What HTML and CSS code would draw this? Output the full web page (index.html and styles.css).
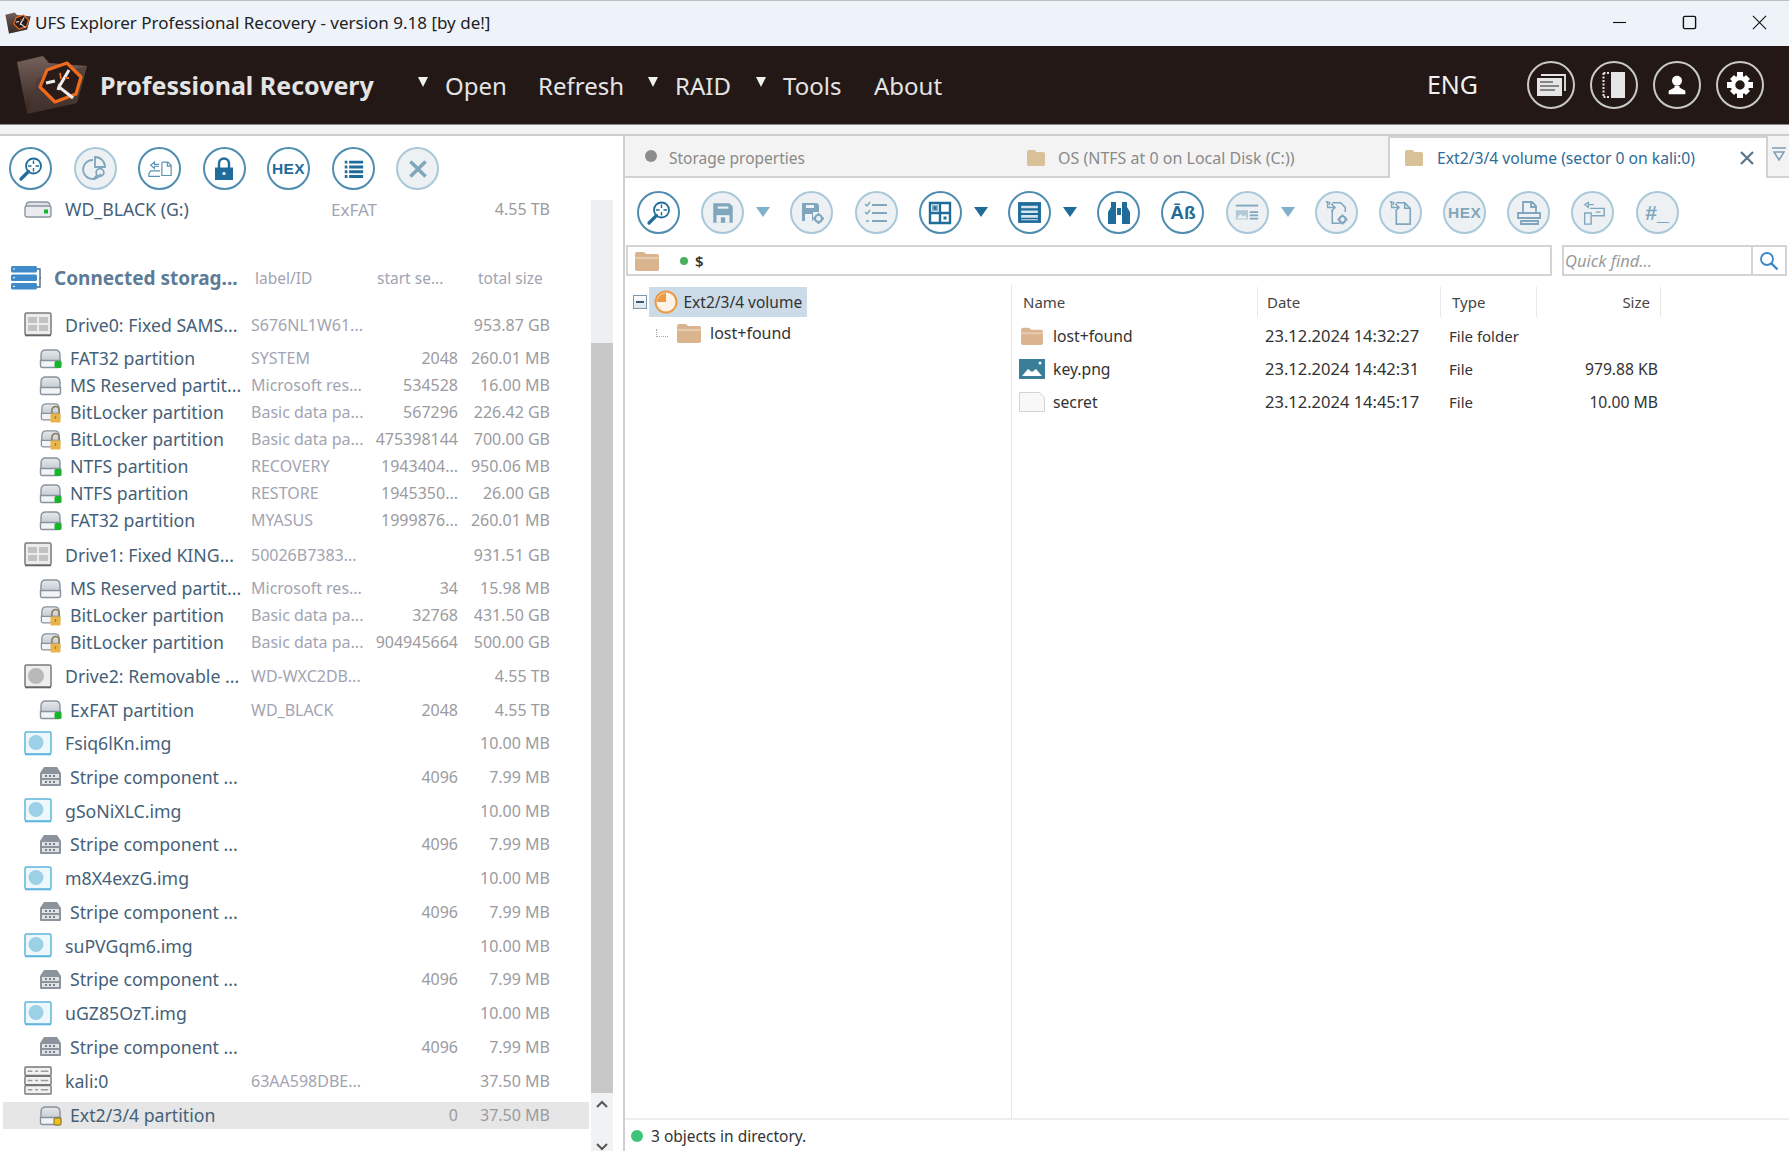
FILE: index.html
```html
<!DOCTYPE html>
<html lang="en">
<head>
<meta charset="utf-8">
<title>UFS Explorer Professional Recovery</title>
<link rel="stylesheet" href="styles.css">
</head>
<body>
<svg class="sprite" xmlns="http://www.w3.org/2000/svg">
  <defs>
    <linearGradient id="fg" x1="0" y1="0" x2="0" y2="1"><stop offset="0" stop-color="#75605a"/><stop offset="1" stop-color="#33241f"/></linearGradient>
    <linearGradient id="dg" x1="0" y1="0" x2="0" y2="1"><stop offset="0" stop-color="#e6e9ec"/><stop offset="1" stop-color="#bcc4cc"/></linearGradient>
  </defs>
  <symbol id="logo" viewBox="16 52 72 66">
    <path d="M17 62 43 56l6 7 38 3-10 37-50 11z" fill="url(#fg)"/>
    <path d="M17 62l10 52 10-36 50-12-10 37-50 11z" fill="#4a3833" opacity=".6"/>
    <path d="M67 63l14 14-5 17-21 8-15-15 7-17z" fill="#2a1c18" stroke="#f06a1c" stroke-width="3.200" stroke-linejoin="round"/>
    <path d="M46 83l9-2M69 70l-10 17 14 11M60 84l-2 6" fill="none" stroke="#eee" stroke-width="3"/>
    <path d="M60 73l1 6M65 78h4" fill="none" stroke="#f06a1c" stroke-width="1.800"/>
  </symbol>
  <symbol id="folder" viewBox="0 0 26 22"><path d="M1 5q0-3 2-3h6q2 0 3 2h11q2 0 2 2v13q0 2-2 2H3q-2 0-2-2z" fill="#d9b48f"/><path d="M1 7h24v2H1z" fill="#e6cdb2"/></symbol>
  <symbol id="folder2" viewBox="0 0 20 18"><path d="M1 3q0-2 2-2h5q2 0 2 2h7q2 0 2 2v11q0 1-2 1H3q-2 0-2-1z" fill="#d8c199"/></symbol>
  <g id="diskbase"><path d="M2 16V7q0-5 5-5h9q5 0 5 5v9" fill="url(#dg)" stroke="#87939f" stroke-width="1.400"/><path d="M1.500 12.500h20v5q0 2-2 2h-16q-2 0-2-2z" fill="#f2f3f4" stroke="#87939f" stroke-width="1.400"/></g>
  <symbol id="part" viewBox="0 0 23 21"><use href="#diskbase"/><rect x="15.500" y="13" width="7" height="7" rx="1.500" fill="#18b52a"/></symbol>
  <symbol id="partgrey" viewBox="0 0 23 21"><use href="#diskbase"/></symbol>
  <symbol id="partlock" viewBox="0 0 23 23"><use href="#diskbase"/><path d="M13 13V9a4 4 0 0 1 8 0v4" fill="none" stroke="#8a7a55" stroke-width="1.700"/><rect x="11.500" y="12.500" width="11" height="10" rx="1.200" fill="#e9b54b"/><path d="M17 15.500v3" stroke="#a9761c" stroke-width="1.400"/></symbol>
  <symbol id="partyellow" viewBox="0 0 23 21"><use href="#diskbase"/><rect x="15" y="13" width="7" height="7" rx="1" fill="#f0c020" stroke="#7f6a20"/></symbol>
  <symbol id="wdisk" viewBox="0 0 28 18"><path d="M2 8V6q0-4 4-4h16q4 0 4 4v2" fill="#dfe2e6" stroke="#8b96a1" stroke-width="1.400"/><rect x="1" y="6" width="26" height="11" rx="2" fill="#e9ebee" stroke="#8b96a1" stroke-width="1.400"/><rect x="20" y="9.500" width="4" height="4" fill="#18b52a"/></symbol>
  <symbol id="drive" viewBox="0 0 28 25"><rect x="1" y="1" width="26" height="22" rx="1.500" fill="#ececec" stroke="#7b7b7b" stroke-width="1.500"/><path d="M1 23.500h26" stroke="#666" stroke-width="1.600"/><rect x="4" y="5" width="9" height="6" fill="#c2c2c2"/><rect x="15" y="5" width="9" height="6" fill="#c2c2c2"/><rect x="4" y="13" width="9" height="6" fill="#c2c2c2"/><rect x="15" y="13" width="9" height="6" fill="#c2c2c2"/></symbol>
  <symbol id="removable" viewBox="0 0 28 25"><rect x="1" y="1" width="26" height="22" rx="1.500" fill="#eee" stroke="#7b7b7b" stroke-width="1.500"/><path d="M1 23.500h26" stroke="#666" stroke-width="1.600"/><circle cx="12" cy="12" r="8" fill="#b9b9b9"/></symbol>
  <symbol id="img" viewBox="0 0 28 25"><rect x="1" y="1" width="26" height="22" rx="1.500" fill="#eef8fc" stroke="#5fb5dd" stroke-width="1.500"/><path d="M1 23.500h26" stroke="#5fb5dd" stroke-width="1.600"/><circle cx="12" cy="11.500" r="7.500" fill="#9bd0e6"/></symbol>
  <symbol id="stripe" viewBox="0 0 23 21"><path d="M5 1h13l4 6v12q0 1-1 1H2q-1 0-1-1V7z" fill="#8b949c"/><path d="M3 8h17v4H3zM3 14h17v4H3z" fill="#dfe3e6"/><path d="M6 10h2M10 10h2M14 10h2M6 16h2M10 16h2M14 16h2" stroke="#77818a" stroke-width="2"/></symbol>
  <symbol id="server" viewBox="0 0 30 32"><rect x="1" y="1" width="28" height="9" rx="1" fill="#f2f2f2" stroke="#767676" stroke-width="1.500"/><rect x="1" y="11" width="28" height="9" rx="1" fill="#f2f2f2" stroke="#767676" stroke-width="1.500"/><rect x="1" y="21" width="28" height="9" rx="1" fill="#f2f2f2" stroke="#767676" stroke-width="1.500"/><path d="M4 5.500h5M12 5.500h3M18 5.500h8M4 15.500h5M12 15.500h3M18 15.500h8M4 25.500h5M12 25.500h3M18 25.500h8" stroke="#9a9a9a" stroke-width="1.600"/></symbol>
  <symbol id="storage" viewBox="0 0 31 26"><path d="M26 4h4v18h-4M30 13h1" fill="none" stroke="#4d6a86" stroke-width="1.400"/><rect x="1" y="1" width="26" height="6.500" rx="1.500" fill="#3f8acb"/><rect x="1" y="9.500" width="26" height="6.500" rx="1.500" fill="#3f8acb"/><rect x="1" y="18" width="26" height="6.500" rx="1.500" fill="#3f8acb"/><path d="M3 4h2M3 12.700h2M3 21.300h2" stroke="#fff"/></symbol>
  <symbol id="i-mag" viewBox="0 0 26 26"><circle cx="15.500" cy="10" r="7.500" fill="none" stroke="currentColor" stroke-width="1.800"/><path d="M10.500 15.500 3 23" stroke="currentColor" stroke-width="3.200" stroke-linecap="round"/><path d="M15.500 4.500v11M10 10h11" stroke="currentColor" stroke-width="1.400" stroke-dasharray="3.500 4"/></symbol>
  <symbol id="i-pie" viewBox="0 0 26 26"><path d="M11 4a9.500 9.500 0 1 0 8 14" fill="none" stroke="currentColor" stroke-width="1.800"/><path d="M13 1a10 10 0 0 1 10 10H13z" fill="none" stroke="currentColor" stroke-width="1.800"/><circle cx="18" cy="16.500" r="3.800" fill="none" stroke="currentColor" stroke-width="1.800"/><path d="m15 19.500-3.500 4" stroke="currentColor" stroke-width="2.200"/></symbol>
  <symbol id="i-xfer" viewBox="0 0 28 26"><path d="M16 6.500V20h10V9l-3.500-3.500H17zM22 6v4h4" fill="none" stroke="currentColor" stroke-width="1.300"/><path d="M13 8H8V5.500L4 9l4 3.500V10h5" fill="none" stroke="currentColor" stroke-width="1.200"/><path d="M14 15H4l-2 3v3h12" fill="none" stroke="currentColor" stroke-width="1.300"/></symbol>
  <symbol id="i-lock" viewBox="0 0 24 26"><path d="M7 12V7.500a5 5 0 0 1 10 0V12" fill="none" stroke="currentColor" stroke-width="2.400"/><path d="M3 11.500h18V24H3z" fill="currentColor"/><circle cx="12" cy="17.500" r="1.600" fill="#fff"/></symbol>
  <symbol id="i-list" viewBox="0 0 24 24"><path d="M7 3h16v3.400H7zM7 8.500h16v3.400H7zM7 14h16v3.400H7zM7 19.500h16v3.400H7zM2 3h3v3.400H2zM2 8.500h3v3.400H2zM2 14h3v3.400H2zM2 19.500h3v3.400H2z" fill="currentColor"/></symbol>
  <symbol id="i-x" viewBox="0 0 24 24"><path d="m5 5 14 14M19 5 5 19" stroke="currentColor" stroke-width="3.200"/></symbol>
  <symbol id="i-save" viewBox="0 0 24 24"><path d="M3 3h15l3 3v15H3z" fill="currentColor"/><path d="M7 6h10v2H7z" fill="#eef2f5"/><path d="M6 14h12v7H6z" fill="#eef2f5"/><path d="M10 16h4v5h-4z" fill="currentColor"/></symbol>
  <symbol id="i-savegear" viewBox="0 0 26 26"><path d="M3 3h15l2 2v7h-6v9H3z" fill="currentColor"/><path d="M7 5h8v3H7zM6 14h7v7H6z" fill="#eef2f5"/><circle cx="19.500" cy="18.500" r="3.500" fill="none" stroke="currentColor" stroke-width="2.200"/><path d="M19.500 13v2M19.500 22v2M14 18.500h2M23 18.500h2" stroke="currentColor" stroke-width="2"/></symbol>
  <symbol id="i-check" viewBox="0 0 26 26"><path d="M9 5h15M9 13h15M9 21h15" stroke="currentColor" stroke-width="2.200"/><path d="m2 4 2 2 3-4M2 12l2 2 3-4M3 21h3" fill="none" stroke="currentColor" stroke-width="1.400"/></symbol>
  <symbol id="i-grid" viewBox="0 0 24 24"><path d="M2 2h20v20H2zM12 2v20M2 12h20" fill="none" stroke="currentColor" stroke-width="2.400"/><path d="M4 4h6v6H4z" fill="currentColor" opacity=".55"/><path d="M5.500 5.500h3v3h-3zM15.500 15.500h3v3h-3z" fill="currentColor"/></symbol>
  <symbol id="i-lines" viewBox="0 0 24 24"><path d="M1 2h22v20H1z" fill="currentColor"/><path d="M4 5.500h16v2.500H4zM4 10h16v2.500H4zM4 14.500h16V17H4zM4 18.500h16v1H4z" fill="#d6e4ee"/></symbol>
  <symbol id="i-bino" viewBox="0 0 26 26"><path d="M2 24V12l3-5V2h5v22zM24 24V12l-3-5V2h-5v22zM11 8h4v7h-4z" fill="currentColor"/></symbol>
  <symbol id="i-card" viewBox="0 0 28 24"><path d="M2 4h24" stroke="currentColor" stroke-width="2"/><path d="M2 9h13v10H2z" fill="currentColor" opacity=".55"/><path d="m3 18 4-5 3 3 2-2 2 4z" fill="#eef2f5"/><path d="M17 11h9M17 14.500h9M17 18h9" stroke="currentColor" stroke-width="2"/></symbol>
  <symbol id="i-filegear" viewBox="0 0 26 28"><path d="M9 11v14h9M9 3h9l5 5v5" fill="none" stroke="currentColor" stroke-width="1.700"/><path d="M2 2h2v6h7M8 4l4 4-4 4M6 2v3" fill="none" stroke="currentColor" stroke-width="1.600"/><circle cx="20" cy="21" r="3.400" fill="none" stroke="currentColor" stroke-width="2.200"/><path d="M20 15.500v2M20 24.500v2M14.500 21h2M23.500 21h2" stroke="currentColor" stroke-width="2"/></symbol>
  <symbol id="i-file" viewBox="0 0 26 28"><path d="M9 12v14h15V9l-6-6H9" fill="none" stroke="currentColor" stroke-width="1.800"/><path d="M2 2h2v6h7M8 4l4 4-4 4M6 2v3M18 3v6h6" fill="none" stroke="currentColor" stroke-width="1.600"/></symbol>
  <symbol id="i-print" viewBox="0 0 26 26"><path d="M7 12V2h9l4 4v6M15 2v5h5" fill="none" stroke="currentColor" stroke-width="1.800"/><path d="M2 13h22v5H2z" fill="none" stroke="currentColor" stroke-width="1.800"/><path d="M5 21h17v3H5z" fill="none" stroke="currentColor" stroke-width="1.800"/></symbol>
  <symbol id="i-move" viewBox="0 0 28 26"><path d="M5 13h7v12H5z" fill="none" stroke="currentColor" stroke-width="1.500"/><path d="M11 8h15v8H13" fill="none" stroke="currentColor" stroke-width="1.500"/><path d="M17 12h5M15 4H9V1.500L5 4l4 3V4" fill="none" stroke="currentColor" stroke-width="1.300"/></symbol>
  <symbol id="h-win" viewBox="0 0 30 24"><path d="M5 2h24v16" fill="none" stroke="#e6e6e6" stroke-width="1.800"/><rect x="1" y="5" width="25" height="18" fill="#e6e6e6"/><path d="M4 9h13M4 13h19M4 17h15" stroke="#666" stroke-width="1.500"/></symbol>
  <symbol id="h-panel" viewBox="0 0 24 28"><rect x="9" y="1" width="14" height="26" fill="#e6e6e6"/><path d="M1.500 2h6M1.500 26h6M1.500 2v24" fill="none" stroke="#e6e6e6" stroke-width="2" stroke-dasharray="2 1.500"/></symbol>
  <symbol id="h-user" viewBox="0 0 24 26"><circle cx="12" cy="8" r="6" fill="#fff"/><path d="M9 14v2l-7 4v4h20v-4l-7-4v-2z" fill="#fff"/></symbol>
  <symbol id="h-gear" viewBox="0 0 28 28"><g fill="#fff"><path d="M11 1h6v5h-6zM11 22h6v5h-6zM1 11h5v6H1zM22 11h5v6h-5z"/><path d="m4 8 4-4 4 4-4 4zM24 8l-4-4-4 4 4 4zM4 20l4 4 4-4-4-4zM24 20l-4 4-4-4 4-4z"/></g><circle cx="14" cy="14" r="7" fill="none" stroke="#fff" stroke-width="4.500"/></symbol>
</svg>

<header class="titlebar">
  <svg class="app-ico"><use href="#logo"/></svg>
  <span class="title-text">UFS Explorer Professional Recovery - version 9.18 [by de!]</span>
  <div class="win-btns">
    <svg class="win-ic" viewBox="0 0 16 16"><path d="M1 8h14" stroke="#111" stroke-width="1.200"/></svg>
    <svg class="win-ic" viewBox="0 0 16 16"><rect x="1.500" y="1.500" width="13" height="13" rx="1.500" fill="none" stroke="#111" stroke-width="1.500"/></svg>
    <svg class="win-ic" viewBox="0 0 16 16"><path d="m1 1 14 14M15 1 1 15" stroke="#111" stroke-width="1.200"/></svg>
  </div>
</header>

<nav class="appbar">
  <svg class="logo"><use href="#logo"/></svg>
  <span class="brand">Professional Recovery</span>
  <span class="caret"></span><span class="menu m-open">Open</span>
  <span class="menu m-refresh">Refresh</span>
  <span class="caret"></span><span class="menu m-raid">RAID</span>
  <span class="caret"></span><span class="menu m-tools">Tools</span>
  <span class="menu m-about">About</span>
  <span class="lang">ENG</span>
  <div class="hbtns">
    <span class="hbtn"><svg class="h1"><use href="#h-win"/></svg></span>
    <span class="hbtn"><svg class="h2"><use href="#h-panel"/></svg></span>
    <span class="hbtn"><svg class="h3"><use href="#h-user"/></svg></span>
    <span class="hbtn"><svg class="h4"><use href="#h-gear"/></svg></span>
  </div>
</nav>
<div class="strip"></div>

<main class="main">
  <section class="left">
    <div class="ltool">
      <span class="cb"><svg class="ci"><use href="#i-mag"/></svg></span>
      <span class="cb off"><svg class="ci"><use href="#i-pie"/></svg></span>
      <span class="cb thin"><svg class="ci"><use href="#i-xfer"/></svg></span>
      <span class="cb"><svg class="ci"><use href="#i-lock"/></svg></span>
      <span class="cb hex">HEX</span>
      <span class="cb"><svg class="ci sm"><use href="#i-list"/></svg></span>
      <span class="cb off"><svg class="ci"><use href="#i-x"/></svg></span>
    </div>
    <div class="lbody">
      <div class="list">
        <div class="row top"><div class="cell"><svg class="dico small"><use href="#wdisk"/></svg><span class="dname">WD_BLACK (G:)</span></div><div class="lab fs">ExFAT</div><div class="st"></div><div class="sz">4.55 TB</div></div>

        <div class="row conn"><div class="cell"><svg class="sico"><use href="#storage"/></svg><span class="cname">Connected storag...</span></div><div class="lab ch ch1">label/ID</div><div class="lab ch ch2">start se...</div><div class="lab ch ch3">total size</div></div>

        <div class="group">
          <div class="row d mb"><div class="cell"><svg class="dico"><use href="#drive"/></svg><span class="dname">Drive0: Fixed SAMS...</span></div><div class="lab">S676NL1W61...</div><div class="st"></div><div class="sz">953.87 GB</div></div>
          <div class="row p"><div class="cell"><svg class="pico"><use href="#part"/></svg><span class="pname">FAT32 partition</span></div><div class="lab">SYSTEM</div><div class="st">2048</div><div class="sz">260.01 MB</div></div>
          <div class="row p"><div class="cell"><svg class="pico"><use href="#partgrey"/></svg><span class="pname">MS Reserved partit...</span></div><div class="lab">Microsoft res...</div><div class="st">534528</div><div class="sz">16.00 MB</div></div>
          <div class="row p"><div class="cell"><svg class="pico"><use href="#partlock"/></svg><span class="pname">BitLocker partition</span></div><div class="lab">Basic data pa...</div><div class="st">567296</div><div class="sz">226.42 GB</div></div>
          <div class="row p"><div class="cell"><svg class="pico"><use href="#partlock"/></svg><span class="pname">BitLocker partition</span></div><div class="lab">Basic data pa...</div><div class="st">475398144</div><div class="sz">700.00 GB</div></div>
          <div class="row p"><div class="cell"><svg class="pico"><use href="#part"/></svg><span class="pname">NTFS partition</span></div><div class="lab">RECOVERY</div><div class="st">1943404...</div><div class="sz">950.06 MB</div></div>
          <div class="row p"><div class="cell"><svg class="pico"><use href="#part"/></svg><span class="pname">NTFS partition</span></div><div class="lab">RESTORE</div><div class="st">1945350...</div><div class="sz">26.00 GB</div></div>
          <div class="row p"><div class="cell"><svg class="pico"><use href="#part"/></svg><span class="pname">FAT32 partition</span></div><div class="lab">MYASUS</div><div class="st">1999876...</div><div class="sz">260.01 MB</div></div>
        </div>
        <div class="group gap">
          <div class="row d mb"><div class="cell"><svg class="dico"><use href="#drive"/></svg><span class="dname">Drive1: Fixed KING...</span></div><div class="lab">50026B7383...</div><div class="st"></div><div class="sz">931.51 GB</div></div>
          <div class="row p"><div class="cell"><svg class="pico"><use href="#partgrey"/></svg><span class="pname">MS Reserved partit...</span></div><div class="lab">Microsoft res...</div><div class="st">34</div><div class="sz">15.98 MB</div></div>
          <div class="row p"><div class="cell"><svg class="pico"><use href="#partlock"/></svg><span class="pname">BitLocker partition</span></div><div class="lab">Basic data pa...</div><div class="st">32768</div><div class="sz">431.50 GB</div></div>
          <div class="row p"><div class="cell"><svg class="pico"><use href="#partlock"/></svg><span class="pname">BitLocker partition</span></div><div class="lab">Basic data pa...</div><div class="st">904945664</div><div class="sz">500.00 GB</div></div>
        </div>
        <div class="group gap">
          <div class="row d mb"><div class="cell"><svg class="dico"><use href="#removable"/></svg><span class="dname">Drive2: Removable ...</span></div><div class="lab">WD-WXC2DB...</div><div class="st"></div><div class="sz">4.55 TB</div></div>
          <div class="row p"><div class="cell"><svg class="pico"><use href="#part"/></svg><span class="pname">ExFAT partition</span></div><div class="lab">WD_BLACK</div><div class="st">2048</div><div class="sz">4.55 TB</div></div>
        </div>
        <div class="group">
          <div class="row d"><div class="cell"><svg class="dico"><use href="#img"/></svg><span class="dname">Fsiq6lKn.img</span></div><div class="lab"></div><div class="st"></div><div class="sz">10.00 MB</div></div>
          <div class="row s"><div class="cell"><svg class="pico"><use href="#stripe"/></svg><span class="pname">Stripe component ...</span></div><div class="lab"></div><div class="st">4096</div><div class="sz">7.99 MB</div></div>
        </div>
        <div class="row d"><div class="cell"><svg class="dico"><use href="#img"/></svg><span class="dname">gSoNiXLC.img</span></div><div class="lab"></div><div class="st"></div><div class="sz">10.00 MB</div></div>
        <div class="row s"><div class="cell"><svg class="pico"><use href="#stripe"/></svg><span class="pname">Stripe component ...</span></div><div class="lab"></div><div class="st">4096</div><div class="sz">7.99 MB</div></div>
        <div class="row d"><div class="cell"><svg class="dico"><use href="#img"/></svg><span class="dname">m8X4exzG.img</span></div><div class="lab"></div><div class="st"></div><div class="sz">10.00 MB</div></div>
        <div class="row s"><div class="cell"><svg class="pico"><use href="#stripe"/></svg><span class="pname">Stripe component ...</span></div><div class="lab"></div><div class="st">4096</div><div class="sz">7.99 MB</div></div>
        <div class="row d"><div class="cell"><svg class="dico"><use href="#img"/></svg><span class="dname">suPVGqm6.img</span></div><div class="lab"></div><div class="st"></div><div class="sz">10.00 MB</div></div>
        <div class="row s"><div class="cell"><svg class="pico"><use href="#stripe"/></svg><span class="pname">Stripe component ...</span></div><div class="lab"></div><div class="st">4096</div><div class="sz">7.99 MB</div></div>
        <div class="row d"><div class="cell"><svg class="dico"><use href="#img"/></svg><span class="dname">uGZ85OzT.img</span></div><div class="lab"></div><div class="st"></div><div class="sz">10.00 MB</div></div>
        <div class="row s"><div class="cell"><svg class="pico"><use href="#stripe"/></svg><span class="pname">Stripe component ...</span></div><div class="lab"></div><div class="st">4096</div><div class="sz">7.99 MB</div></div>
        <div class="row d mb last"><div class="cell"><svg class="dico tall"><use href="#server"/></svg><span class="dname">kali:0</span></div><div class="lab">63AA598DBE...</div><div class="st"></div><div class="sz">37.50 MB</div></div>
        <div class="row p sel"><div class="cell"><svg class="pico"><use href="#partyellow"/></svg><span class="pname">Ext2/3/4 partition</span></div><div class="lab"></div><div class="st">0</div><div class="sz">37.50 MB</div></div>
      </div>
      <div class="scroll">
        <div class="sb-track"></div>
        <div class="sb-thumb"></div>
        <div class="sb-end">
          <svg class="chev" viewBox="0 0 12 8"><path d="m1 7 5-5 5 5" fill="none" stroke="#555" stroke-width="2"/></svg>
          <svg class="chev" viewBox="0 0 12 8"><path d="m1 1 5 5 5-5" fill="none" stroke="#555" stroke-width="2"/></svg>
        </div>
      </div>
    </div>
  </section>

  <section class="right">
    <div class="tabs">
      <div class="tab t1"><span class="gdot"></span>Storage properties</div>
      <div class="tab t2"><svg class="tfold"><use href="#folder2"/></svg>OS (NTFS at 0 on Local Disk (C:))</div>
      <div class="tab t3"><svg class="tfold"><use href="#folder2"/></svg><span class="t3-text">Ext2/3/4 volume (sector 0 on kali:0)</span><svg class="tx" viewBox="0 0 14 14"><path d="m1 1 12 12M13 1 1 13" stroke="#5a7488" stroke-width="2.200"/></svg></div>
      <div class="tabmenu"><svg class="tm" viewBox="0 0 16 16"><path d="M1 2h14M3 6h10L8 14z" fill="none" stroke="#7ba0b8" stroke-width="1.500"/></svg></div>
    </div>
    <div class="rtool">
      <span class="cb"><svg class="ci"><use href="#i-mag"/></svg></span>
      <span class="cb off"><svg class="ci"><use href="#i-save"/></svg></span><span class="dd off"></span>
      <span class="cb off"><svg class="ci"><use href="#i-savegear"/></svg></span>
      <span class="cb off"><svg class="ci"><use href="#i-check"/></svg></span>
      <span class="cb"><svg class="ci md"><use href="#i-grid"/></svg></span><span class="dd"></span>
      <span class="cb"><svg class="ci lg"><use href="#i-lines"/></svg></span><span class="dd"></span>
      <span class="cb"><svg class="ci"><use href="#i-bino"/></svg></span>
      <span class="cb ab">Āß</span>
      <span class="cb off"><svg class="ci"><use href="#i-card"/></svg></span><span class="dd off"></span>
      <span class="cb off"><svg class="ci"><use href="#i-filegear"/></svg></span>
      <span class="cb off"><svg class="ci"><use href="#i-file"/></svg></span>
      <span class="cb off hex">HEX</span>
      <span class="cb off"><svg class="ci"><use href="#i-print"/></svg></span>
      <span class="cb off"><svg class="ci"><use href="#i-move"/></svg></span>
      <span class="cb off hash">#_</span>
    </div>
    <div class="pathrow">
      <div class="pathbox"><svg class="pfold"><use href="#folder"/></svg><span class="pdot"></span><span class="ptext">$</span></div>
      <div class="quick"><span class="qtext">Quick find...</span><span class="qbtn"><svg class="qi" viewBox="0 0 20 20"><circle cx="8" cy="8" r="6" fill="none" stroke="#3a86c8" stroke-width="1.800"/><path d="m12.500 12.500 6 6" stroke="#3a86c8" stroke-width="2.400"/></svg></span></div>
    </div>
    <div class="content">
      <div class="tree">
        <div class="troot">
          <span class="minus"></span>
          <span class="tsel"><svg class="pie" viewBox="0 0 24 24"><circle cx="12" cy="12" r="10.500" fill="#fdf3e6" stroke="#ec9a45" stroke-width="2"/><path d="M12 3a9 9 0 0 0-9 9h9z" fill="#ec9a45"/></svg>Ext2/3/4 volume</span>
        </div>
        <div class="tchild"><span class="dots"></span><svg class="tcf"><use href="#folder"/></svg>lost+found</div>
      </div>
      <div class="files">
        <div class="fhead"><span class="fh c1">Name</span><span class="fh c2">Date</span><span class="fh c3">Type</span><span class="fh c4">Size</span></div>
        <div class="frow"><span class="c1 fn"><svg class="fi"><use href="#folder"/></svg>lost+found</span><span class="c2">23.12.2024 14:32:27</span><span class="c3">File folder</span><span class="c4"></span></div>
        <div class="frow"><span class="c1 fn"><svg class="fi" viewBox="0 0 26 20"><rect width="26" height="20" fill="#3a7f97"/><path d="M3 17l6-7 4 3 4-3 6 7z" fill="#fff"/><circle cx="21" cy="4" r="1.500" fill="#fff"/></svg>key.png</span><span class="c2">23.12.2024 14:42:31</span><span class="c3">File</span><span class="c4">979.88 KB</span></div>
        <div class="frow"><span class="c1 fn"><svg class="fi" viewBox="0 0 26 20"><path d="M.5.500h20l5 5v14H.5z" fill="#f8f8f8" stroke="#d4d4d4"/></svg>secret</span><span class="c2">23.12.2024 14:45:17</span><span class="c3">File</span><span class="c4">10.00 MB</span></div>
      </div>
    </div>
    <footer class="status"><span class="sdot"></span>3 objects in directory.</footer>
  </section>
</main>
</body>
</html>
```
FILE: styles.css
```css
* { box-sizing: border-box; }
html, body { margin: 0; padding: 0; }
body {
  width: 1789px; height: 1151px; overflow: hidden;
  font-family: "Noto Sans", "Open Sans", sans-serif;
  background: #fff; color: #333;
}
.sprite { width: 0; height: 0; display: block; overflow: hidden; }

.titlebar {
  height: 46px; background: #eef3fa; border-top: 1px solid #bdbdbd;
  display: flex; align-items: center; padding: 0 0 2px 5px;
}
.app-ico { width: 26px; height: 24px; margin-right: 4px; }
.title-text { font-size: 17px; color: #222; white-space: nowrap; }
.win-btns { margin-left: auto; display: flex; gap: 55px; padding-right: 22px; }
.win-ic { width: 15px; height: 15px; display: block; }

.appbar {
  height: 78px; background: #231815; color: #e6e6e6;
  display: flex; align-items: center; white-space: nowrap;
}
.logo { width: 72px; height: 66px; margin-left: 16px; flex: none; }
.brand { font-size: 25px; font-weight: 700; margin-left: 12px; width: 318px; color: #e4e4e4; }
.caret {
  width: 0; height: 0; flex: none; margin-right: 17px; margin-bottom: 6px;
  border-left: 5px solid transparent; border-right: 5px solid transparent; border-top: 10px solid #f0f0f0;
}
.menu { font-size: 24px; color: #e4e4e4; }
.m-open { width: 93px; }
.m-refresh { width: 110px; }
.m-raid { width: 81px; }
.m-tools { width: 91px; }
.lang { font-size: 25px; margin-left: auto; color: #f0f0f0; margin-right: 49px; transform: translateY(-1px); }
.hbtns { display: flex; gap: 15px; margin-right: 25px; }
.hbtn {
  width: 48px; height: 48px; border: 2px solid #c9c9c9; border-radius: 50%;
  display: flex; align-items: center; justify-content: center;
}
.h1 { width: 30px; height: 24px; }
.h2 { width: 24px; height: 28px; }
.h3 { width: 20px; height: 24px; }
.h4 { width: 28px; height: 28px; }

.strip { height: 12px; background: #f3f3f3; border-bottom: 2px solid #cdcdcd; border-top: 1px solid #888; }

.main { display: flex; height: 1015px; }
.left { width: 625px; flex: none; border-right: 2px solid #cfcfcf; }
.ltool { height: 61px; padding: 11px 0 0 9px; display: flex; gap: 21.500px; align-items: flex-start; }

.cb {
  width: 43px; height: 43px; flex: none; border-radius: 50%;
  border: 2px solid #4f8db0; background: #fff; color: #1f6b9a;
  display: flex; align-items: center; justify-content: center;
}
.cb.off { border-color: #a9c8d9; background: #eef1f3; color: #7fa6bd; }
.cb.thin { color: #5a93b5; }
.ci { width: 26px; height: 26px; }
.ci.sm { width: 21px; height: 21px; }
.ci.md { width: 24px; height: 24px; }
.ci.lg { width: 25px; height: 25px; }
.hex { font-weight: 700; font-size: 15.500px; letter-spacing: .4px; font-family: "Liberation Sans", sans-serif; }
.ab { font-weight: 700; font-size: 19px; font-family: "Liberation Sans", sans-serif; }
.hash { font-weight: 700; font-size: 21px; font-family: "Liberation Sans", sans-serif; }

.lbody { display: flex; height: 954px; overflow: hidden; }
.list { width: 586px; margin-left: 3px; flex: none; }
.row {
  display: grid; grid-template-columns: 248px 120px 87px 92px 39px;
  align-items: center; white-space: nowrap;
}
.cell { display: flex; align-items: center; }
.top { height: 24px; margin-bottom: 44px; }
.conn { height: 26px; margin-bottom: 17px; }
.d { height: 33.750px; }
.mb { margin-bottom: 3px; }
.mb.last { margin-bottom: 4px; }
.p { height: 27px; }
.s { height: 33.750px; }
.group { margin-top: 3px; }
.group.gap { margin-top: 4px; }
.sel { background: #e6e6e6; width: 586px; }
.dico { width: 28px; height: 25px; margin-left: 21px; margin-right: 13px; flex: none; }
.dico.small { height: 18px; }
.dico.tall { height: 32px; }
.pico { width: 23px; height: 21px; margin-left: 36px; margin-right: 8px; flex: none; }
.sico { width: 31px; height: 26px; margin-left: 7px; margin-right: 13px; flex: none; }
.dname, .pname { font-size: 17.700px; color: #456178; }
.cname { font-size: 19px; font-weight: 700; color: #5d7b95; }
.lab { font-size: 16px; color: #a2a4b2; overflow: visible; }
.fs { padding-left: 80px; font-size: 17px; }
.ch { font-size: 15.500px; }
.ch1 { padding-left: 4px; }
.ch2 { padding-left: 6px; }
.ch3 { padding-left: 20px; }
.st, .sz { font-size: 16px; color: #9b9ba0; text-align: right; }

.scroll { width: 22px; margin-left: 2px; margin-top: 3px; display: flex; flex-direction: column; flex: none; }
.sb-track { height: 143px; background: #eeeff1; flex: none; }
.sb-thumb { height: 750px; background: #c8c8c8; flex: none; }
.sb-end { flex: 1; background: #f1f2f4; display: flex; flex-direction: column; justify-content: space-between; align-items: center; padding: 7px 0 0; }
.chev { width: 12px; height: 8px; display: block; }

.right { flex: 1; display: flex; flex-direction: column; min-width: 0; }
.tabs { height: 42px; display: flex; align-items: flex-start; background: #f3f3f3; border-bottom: 2px solid #d2d2d2; flex: none; }
.tab { display: flex; align-items: center; white-space: nowrap; font-size: 15.500px; color: #8a8a8a; height: 44px; }
.t1 { width: 401px; padding-left: 20px; }
.gdot { width: 12px; height: 12px; border-radius: 50%; background: #8d8d8d; margin-right: 12px; transform: translateY(-2px); }
.t2 { width: 362px; font-size: 16px; }
.tfold { width: 20px; height: 18px; margin-right: 12px; flex: none; }
.t3 {
  width: 380px; background: #fff; border: 2px solid #d2d2d2; border-bottom: 0;
  height: 42px; padding-left: 14px; color: #2f6c96; flex: none; font-size: 15.700px;
}
.t3 .tfold { margin-right: 13px; }
.t3-text { width: 303px; }
.tx { width: 14px; height: 14px; flex: none; }
.tabmenu { flex: 1; display: flex; justify-content: center; padding-top: 10px; }
.tm { width: 16px; height: 16px; }

.rtool { height: 67px; padding: 13px 0 0 12px; display: flex; gap: 21.150px; align-items: flex-start; flex: none; }
.dd {
  width: 0; height: 0; margin: 16px -1px 0 -9px; flex: none;
  border-left: 7px solid transparent; border-right: 7px solid transparent; border-top: 10px solid #1f6b9a;
}
.dd.off { border-top-color: #7fb0cc; }

.pathrow { height: 31px; display: flex; gap: 10px; margin: 0 2px 0 1px; flex: none; }
.pathbox { flex: 1; border: 2px solid #d4d4d4; display: flex; align-items: center; padding-left: 6px; }
.pfold { width: 26px; height: 22px; margin-right: 20px; }
.pdot { width: 8px; height: 8px; border-radius: 50%; background: #4caf5e; margin-right: 7px; }
.ptext { font-size: 15px; font-weight: 600; color: #333; }
.quick { width: 225px; border: 2px solid #d4d4d4; display: flex; align-items: center; flex: none; }
.qtext { flex: 1; font-style: italic; font-size: 16.500px; color: #9a9a9a; padding-left: 1px; }
.qbtn { width: 34px; height: 100%; border-left: 2px solid #d4d4d4; display: flex; align-items: center; justify-content: center; }
.qi { width: 20px; height: 20px; }

.content { flex: 1; display: flex; min-height: 0; padding-top: 9px; }
.tree { width: 387px; border-right: 1px solid #e8e8e8; flex: none; padding-top: 2px; font-size: 16px; color: #333; }
.troot { display: flex; align-items: center; height: 30px; padding-left: 8px; }
.minus {
  width: 14px; height: 14px; border: 1px solid #7d95a8; background: linear-gradient(#fff, #dde5ec);
  display: flex; align-items: center; justify-content: center; margin-right: 2px; flex: none;
}
.minus::before { content: ""; width: 8px; height: 1.500px; background: #39566e; }
.tsel { background: #ccdbe8; height: 30px; width: 158px; display: flex; align-items: center; white-space: nowrap; padding-left: 5px; color: #333; font-size: 15.500px; }
.pie { width: 24px; height: 24px; margin-right: 5.500px; flex: none; }
.tchild { display: flex; align-items: center; height: 32px; padding-left: 31px; white-space: nowrap; }
.dots { width: 12px; height: 8px; border-left: 1px dotted #aaa; border-bottom: 1px dotted #aaa; margin-right: 8px; }
.tcf { width: 26px; height: 22px; margin-right: 8px; }

.files { flex: 1; font-size: 15.700px; color: #333; }
.fhead { display: grid; grid-template-columns: 246px 183px 96px 124px; height: 34px; align-items: center; color: #444; font-size: 15px; }
.fh { height: 30px; display: flex; align-items: center; border-right: 1px solid #e8e8e8; }
.fhead .c1 { padding-left: 11px; }
.fhead .c2 { padding-left: 9px; }
.fhead .c3 { padding-left: 11px; }
.fhead .c4 { padding-right: 10px; justify-content: flex-end; }
.frow { display: grid; grid-template-columns: 246px 183px 96px 124px; height: 33px; align-items: center; white-space: nowrap; }
.frow .c1 { padding-left: 7px; }
.frow .c2 { padding-left: 7px; font-size: 16.500px; }
.frow .c3 { padding-left: 8px; font-size: 15px; }
.frow .c4 { padding-right: 3px; text-align: right; }
.fn { display: flex; align-items: center; }
.fi { width: 26px; height: 20px; margin-right: 8px; flex: none; }

.status { height: 33px; flex: none; border-top: 2px solid #ededed; display: flex; align-items: center; padding-left: 6px; font-size: 15.500px; color: #333; }
.sdot { width: 12px; height: 12px; border-radius: 50%; background: #3cc47a; margin-right: 8px; }
```
